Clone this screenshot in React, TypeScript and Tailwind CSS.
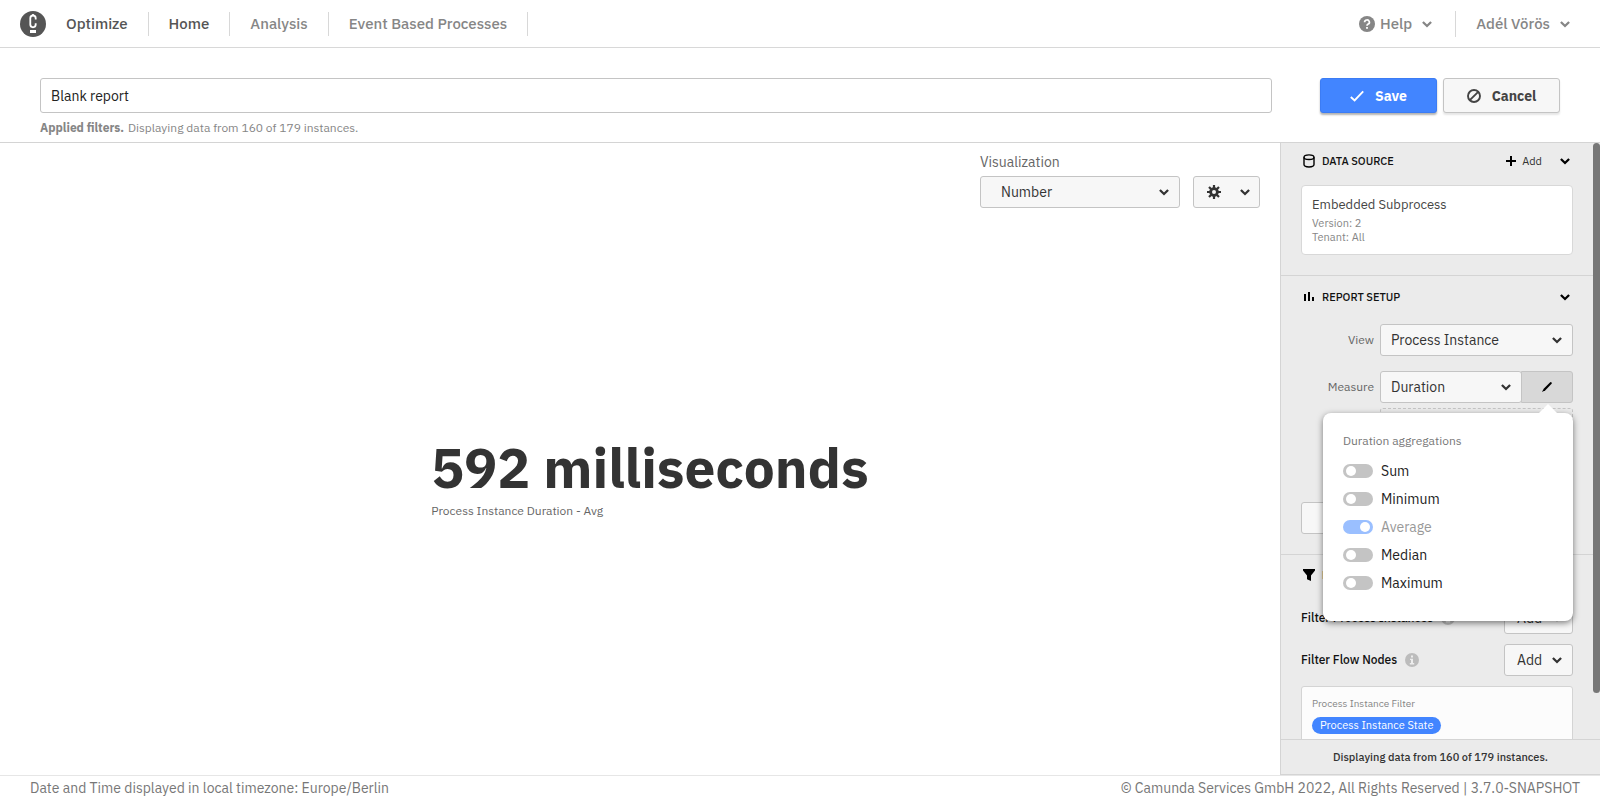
import React, { useState } from 'react';

const ChevronIcon: React.FC<{ className?: string }> = ({ className = '' }) => (
  <svg className={`shrink-0 ${className}`} width="10" height="7" viewBox="0 0 10 7" fill="none" aria-hidden="true">
    <path d="M0.9 1 5 5 9.1 1" stroke="currentColor" strokeWidth="2.3" />
  </svg>
);

const LogoIcon = () => (
  <svg className="shrink-0" width="26" height="26" viewBox="0 0 26 26" aria-hidden="true">
    <circle cx="13" cy="13" r="13" fill="#555" />
    <path d="M15.7 8.6V7.2a2.7 2.7 0 0 0-5.4 0v6.4a2.7 2.7 0 0 0 5.4 0v-1.4M13 4.4V2.9" fill="none" stroke="#fff" strokeWidth="1.8" />
    <rect x="10" y="19" width="6" height="3" fill="#fff" />
  </svg>
);

const HelpIcon = () => (
  <svg className="shrink-0" width="16" height="16" viewBox="0 0 16 16" aria-hidden="true">
    <circle cx="8" cy="8" r="8" fill="currentColor" />
    <path d="M5.6 6.2a2.4 2.2 0 1 1 3.6 1.9C8.3 8.6 8 8.9 8 9.8" fill="none" stroke="#fff" strokeWidth="1.7" />
    <rect x="7.1" y="11" width="1.8" height="1.8" fill="#fff" />
  </svg>
);

const CheckIcon = () => (
  <svg width="14" height="12" viewBox="0 0 14 12" fill="none" aria-hidden="true">
    <path d="M0.8 7 4.6 10.4 13.2 1.4" stroke="currentColor" strokeWidth="1.9" />
  </svg>
);

const StopIcon = () => (
  <svg width="14" height="14" viewBox="0 0 14 14" fill="none" aria-hidden="true">
    <circle cx="7" cy="7" r="6" stroke="currentColor" strokeWidth="1.9" />
    <path d="M2.8 11.2 11.2 2.8" stroke="currentColor" strokeWidth="1.9" />
  </svg>
);

const GearIcon = () => (
  <svg width="14" height="14" viewBox="0 0 14 14" fill="none" aria-hidden="true">
    <circle cx="7" cy="7" r="3.4" stroke="currentColor" strokeWidth="2.8" />
    <path
      d="M7 0v3M7 11v3M0 7h3M11 7h3M2 2l2 2M10 10l2 2M2 12l2-2M10 4l2-2"
      stroke="currentColor"
      strokeWidth="2.2"
    />
  </svg>
);

const DatabaseIcon = () => (
  <svg width="12" height="14" viewBox="0 0 12 14" fill="none" aria-hidden="true">
    <ellipse cx="6" cy="3.2" rx="5" ry="2.3" stroke="currentColor" strokeWidth="1.4" />
    <path d="M1 3.2v7.4c0 1.3 2 2.4 5 2.4s5-1.1 5-2.4V3.2" stroke="currentColor" strokeWidth="1.4" />
  </svg>
);

const ChartIcon = () => (
  <svg width="12" height="14" viewBox="0 0 12 14" fill="currentColor" aria-hidden="true">
    <rect x="1" y="4" width="2" height="7" />
    <rect x="5" y="2" width="2" height="9" />
    <rect x="9" y="7" width="2" height="4" />
  </svg>
);

const FilterIcon = () => (
  <svg width="12" height="14" viewBox="0 0 12 14" fill="currentColor" aria-hidden="true">
    <path d="M0 1h12v1.4L8 7.4V13L4 11.2V7.4L0 2.4z" />
  </svg>
);

const PlusIcon = () => (
  <svg width="10" height="10" viewBox="0 0 10 10" aria-hidden="true">
    <path d="M5 0v10M0 5h10" stroke="#000" strokeWidth="2" />
  </svg>
);

const PencilIcon = () => (
  <svg width="10" height="10" viewBox="0 0 10 10" fill="#000" aria-hidden="true">
    <path d="M8.2 0.3 9 0l.9.9-.3.8L3.4 8.2 0 10l1.7-3.3z" />
  </svg>
);

const InfoIcon = () => (
  <svg width="14" height="14" viewBox="0 0 14 14" aria-hidden="true">
    <circle cx="7" cy="7" r="7" fill="#bcbcbc" />
    <path d="M6 2.6h2v2H6zM5 5.8h3v4.3h1.2v1.3H4.8v-1.3H6V7H5z" fill="#ededed" />
  </svg>
);

interface SelectProps {
  id: string;
  label?: string;
  value: string;
  className?: string;
  selectClassName?: string;
}

const Select: React.FC<SelectProps> = ({ id, label, value, className = '', selectClassName = 'pl-2.5' }) => (
  <div className={`relative ${className}`}>
    <select
      id={id}
      aria-label={label}
      defaultValue={value}
      className={`block h-8 w-full appearance-none rounded-[3px] border border-[#c4c4c4] bg-[#f7f7f7] pr-7 text-sm text-[#333] ${selectClassName}`}
    >
      <option>{value}</option>
    </select>
    <ChevronIcon className="pointer-events-none absolute top-[13px] right-[11px] text-[#333]" />
  </div>
);

interface SectionHeaderProps {
  icon: React.ReactNode;
  title: string;
  children?: React.ReactNode;
}

const SectionHeader: React.FC<SectionHeaderProps> = ({ icon, title, children }) => (
  <div className="flex h-6 items-center pr-[3px] pl-0.5 text-black">
    {icon}
    <h2 className="ml-[7px] flex-1 text-[11px] font-medium text-[#111]">{title}</h2>
    {children}
    <button type="button" aria-label={`Toggle ${title}`}>
      <ChevronIcon />
    </button>
  </div>
);

const FilterRow: React.FC<{ title: string }> = ({ title }) => (
  <div className="flex items-center">
    <span className="mr-2 text-xs font-medium text-[#111]">{title}</span>
    <InfoIcon />
    <button
      type="button"
      className="ml-auto flex h-8 w-[69px] items-center justify-between rounded-[3px] border border-[#c4c4c4] bg-[#f7f7f7] px-2.5 text-sm text-[#333]"
    >
      <span className="pl-0.5">Add</span>
      <ChevronIcon />
    </button>
  </div>
);

const navItems = ['Home', 'Analysis', 'Event Based Processes'];

const aggregations = [
  { id: 'sum', label: 'Sum' },
  { id: 'min', label: 'Minimum' },
  { id: 'avg', label: 'Average' },
  { id: 'median', label: 'Median' },
  { id: 'max', label: 'Maximum' },
];

const AggregationPopover = () => {
  const [active, setActive] = useState<string[]>(['avg']);

  const toggle = (id: string) => {
    setActive(active.includes(id) ? active.filter((a) => a !== id) : [...active, id]);
  };

  return (
    <div className="absolute top-[42px] right-0 z-10 h-[208px] w-[250px] rounded-lg bg-white px-5 pt-5 shadow-[0_2px_6px_rgba(0,0,0,0.5)]">
      <svg className="absolute -top-[9px] right-[15px]" width="20" height="10" viewBox="0 0 20 10" aria-hidden="true">
        <path d="M0 10 10 0l10 10z" fill="#fff" />
      </svg>
      <h3 className="mb-3 text-xs leading-4 text-[#777]">Duration aggregations</h3>
      {aggregations.map(({ id, label }) => {
        // the last active aggregation can't be switched off
        const locked = active.length === 1 && active[0] === id;
        return (
          <label key={id} className={`mb-2 flex h-5 items-center gap-2 text-sm ${locked ? 'text-[#999]' : 'text-[#222]'}`}>
            <input
              type="checkbox"
              role="switch"
              checked={active.includes(id)}
              disabled={locked}
              onChange={() => toggle(id)}
              className="flex h-3.5 w-[30px] appearance-none items-center rounded-full bg-[#c4c4c4] px-[3px] before:size-2.5 before:rounded-full before:bg-white checked:justify-end checked:bg-[#4285ff] checked:disabled:bg-[#9abfff]"
            />
            {label}
          </label>
        );
      })}
    </div>
  );
};

const Header = () => (
  <header className="flex h-12 shrink-0 items-center border-b border-[#d8d8d8] pr-[30px] pl-5 text-[15px] font-medium text-[#868686]">
    <a href="#" className="flex items-center gap-5 pr-5 text-[#555]">
      <LogoIcon />
      <span className="pt-0.5">Optimize</span>
    </a>
    <nav className="flex h-6 items-center border-l border-[#d8d8d8]">
      {navItems.map((item) => (
        <a
          key={item}
          href="#"
          className={`flex h-6 items-center border-r border-[#d8d8d8] px-5 pt-0.5 ${item === 'Home' ? 'text-[#555]' : ''}`}
        >
          {item}
        </a>
      ))}
    </nav>
    <div className="ml-auto flex h-[26px] items-center">
      <button type="button" className="flex h-full items-center border-r border-[#d8d8d8] pr-[23px]">
        <HelpIcon />
        <span className="mr-2.5 ml-[5px] pt-0.5">Help</span>
        <ChevronIcon className="mt-0.5" />
      </button>
      <button type="button" className="flex items-center gap-2.5 pl-5">
        <span className="pt-0.5">Adél Vörös</span>
        <ChevronIcon className="mt-0.5" />
      </button>
    </div>
  </header>
);

const Sidebar = () => (
  <aside className="flex w-80 shrink-0 flex-col border-b border-l border-[#d4d4d4] bg-[#ebebeb]">
    <div className="flex min-h-0 flex-1">
      <div className="min-w-0 flex-1 overflow-hidden">
        <section className="border-b border-[#d4d4d4] px-5 pt-1.5 pb-5">
          <SectionHeader icon={<DatabaseIcon />} title="DATA SOURCE">
            <button type="button" className="mr-[18px] flex items-center gap-1.5 text-[11px] text-[#333]">
              <PlusIcon />
              Add
            </button>
          </SectionHeader>
          <div className="mt-3 rounded border border-[#d8d8d8] bg-white p-2.5">
            <div className="mb-0.5 text-[13px] leading-[18px] text-[#444]">Embedded Subprocess</div>
            <div className="text-[11px] leading-[14px] text-[#868686]">Version: 2</div>
            <div className="text-[11px] leading-[14px] text-[#868686]">Tenant: All</div>
          </div>
        </section>

        <section className="relative border-b border-[#d4d4d4] px-5 pt-[9px] pb-5">
          <SectionHeader icon={<ChartIcon />} title="REPORT SETUP" />
          <div className="mt-[15px] flex items-center">
            <label htmlFor="view" className="mr-1.5 flex-1 text-right text-xs text-[#666]">View</label>
            <Select id="view" value="Process Instance" className="w-[193px]" />
          </div>
          <div className="relative mt-[15px] flex items-center">
            <label htmlFor="measure" className="mr-1.5 flex-1 text-right text-xs text-[#666]">Measure</label>
            <Select id="measure" value="Duration" className="w-[142px]" />
            <button
              type="button"
              aria-label="Edit aggregations"
              className="-ml-px flex h-8 w-[52px] items-center justify-center rounded-r-[3px] border border-[#c4c4c4] bg-[#d8d8d8]"
            >
              <PencilIcon />
            </button>
            <AggregationPopover />
          </div>
          <div className="mt-[5px] ml-[79px] h-8 rounded-[3px] border border-dashed border-[#c4c4c4]" />
          <button
            type="button"
            aria-label="Report options"
            className="mt-[62px] block h-8 w-full rounded-[3px] border border-[#c4c4c4] bg-[#f7f7f7]"
          />
        </section>

        <section className="px-5 pt-2">
          <SectionHeader icon={<FilterIcon />} title="FILTERS" />
          <div className="mt-[15px] mb-2.5 flex flex-col gap-2.5">
            <FilterRow title="Filter Process Instances" />
            <FilterRow title="Filter Flow Nodes" />
          </div>
          <div className="h-20 rounded-[3px] border border-[#d4d4d4] bg-[#fcfcfc] px-2.5 pt-2.5">
            <div className="mb-1.5 text-[10px] leading-[14px] text-[#868686]">Process Instance Filter</div>
            <div className="flex h-[17px] w-fit items-center rounded-full bg-[#4285ff] px-2 text-[11px] text-white">
              Process Instance State
            </div>
          </div>
        </section>
      </div>
      <div className="w-[7px] pb-[46px]">
        <div className="h-full rounded-full bg-[#777]" />
      </div>
    </div>
    <p className="flex h-[35px] shrink-0 items-center justify-center border-t border-[#d4d4d4] text-[11px] font-medium text-[#333]">
      Displaying data from 160 of 179 instances.
    </p>
  </aside>
);

export default function App() {
  return (
    <div className="flex h-screen flex-col bg-white font-['IBM_Plex_Sans',Roboto,sans-serif] text-[#333]">
      <Header />

      <div className="flex shrink-0 items-start border-b border-[#d4d4d4] px-10 pt-[30px] pb-1.5">
        <div className="mr-12 flex-1">
          <input
            type="text"
            aria-label="Report name"
            defaultValue="Blank report"
            className="block h-[35px] w-full rounded-[3px] border border-[#c4c4c4] px-2.5 text-sm text-[#222]"
          />
          <p className="mt-[7px] flex gap-1 text-xs leading-4 text-[#868686]">
            <b>Applied filters.</b>
            <span>Displaying data from 160 of 179 instances.</span>
          </p>
        </div>
        <div className="flex gap-1.5 text-sm font-bold">
          <button
            type="button"
            className="flex h-[35px] w-[117px] items-center justify-center gap-[11px] rounded-[3px] border border-[#3c7cf4] bg-[#4285ff] text-white shadow-[0_2px_2px_rgba(0,0,0,0.3)]"
          >
            <CheckIcon />
            Save
          </button>
          <button
            type="button"
            className="flex h-[35px] w-[117px] items-center justify-center gap-[11px] rounded-[3px] border border-[#c4c4c4] bg-[#f7f7f7] text-[#444] shadow-[0_2px_2px_rgba(0,0,0,0.1)]"
          >
            <StopIcon />
            Cancel
          </button>
        </div>
      </div>

      <div className="flex min-h-0 flex-1">
        <main className="flex flex-1 flex-col px-5 pt-[9px]">
          <div className="flex items-end justify-end gap-[13px]">
            <div className="w-[200px]">
              <label htmlFor="visualization" className="mb-1 block text-sm text-[#666]">Visualization</label>
              <Select id="visualization" value="Number" selectClassName="pl-5" />
            </div>
            <button
              type="button"
              aria-label="Visualization settings"
              className="flex h-8 w-[67px] items-center justify-between rounded-[3px] border border-[#c4c4c4] bg-[#f7f7f7] pr-[9px] pl-[13px] text-[#333]"
            >
              <GearIcon />
              <ChevronIcon />
            </button>
          </div>
          <div className="flex flex-1 items-center justify-center pb-8 pl-5">
            <div>
              <div className="text-[55px] leading-[70px] font-bold">592 milliseconds</div>
              <div className="text-xs leading-4 text-[#666]">Process Instance Duration - Avg</div>
            </div>
          </div>
        </main>
        <Sidebar />
      </div>

      <footer className="flex h-[25px] shrink-0 items-center justify-between border-t border-[#e6e6e6] pr-5 pl-[30px] text-sm text-[#777]">
        <span>Date and Time displayed in local timezone: Europe/Berlin</span>
        <span>© Camunda Services GmbH 2022, All Rights Reserved | 3.7.0-SNAPSHOT</span>
      </footer>
    </div>
  );
}
